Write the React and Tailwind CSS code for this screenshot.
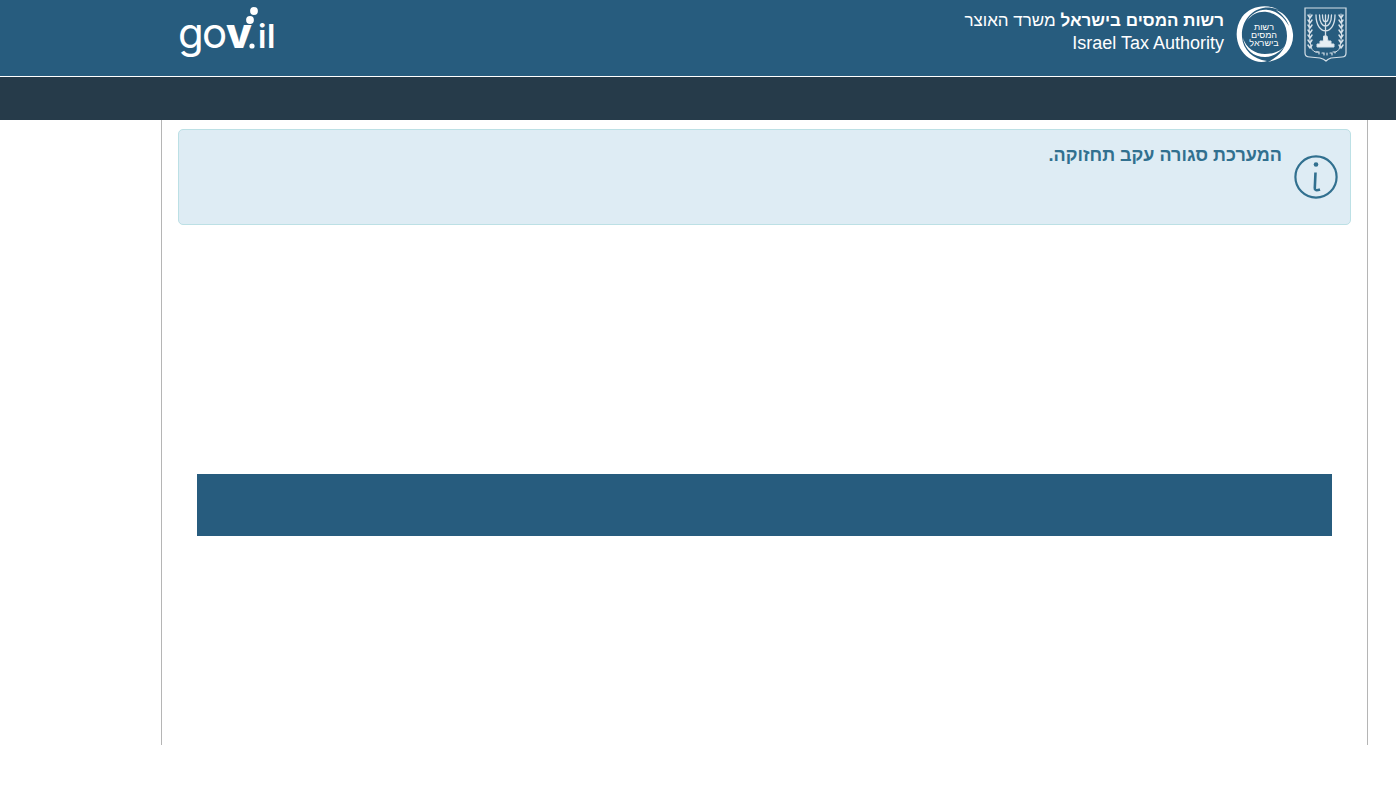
import React from "react";

const GovLogo = () => {
  return (
    <svg
      className="block h-[64px] w-[104px]"
      viewBox="0 0 104 64"
      fill="white"
      fontFamily="Inter, sans-serif"
      role="img"
      aria-label="gov.il"
    >
      <text x="2" y="48" fontSize="42" fontWeight="400">g</text>
      <text x="26" y="48" fontSize="42" fontWeight="400">o</text>
      <text x="50" y="48" fontSize="42" fontWeight="800">v</text>
      <circle cx="76" cy="46" r="2.600" />
      <text x="82" y="48" fontSize="32" fontWeight="600">i</text>
      <text x="91" y="48" fontSize="32" fontWeight="600">l</text>
      <circle cx="74" cy="20" r="3.900" />
      <circle cx="78" cy="11" r="3.900" />
    </svg>
  );
};

const AuthorityLogo = () => {
  return (
    <svg
      className="block size-[58px]"
      viewBox="0 0 58 58"
      fill="white"
      role="img"
      aria-label="רשות המסים"
    >
      <path d="M43 5C31-2 14 1 6 12C-4 27 1 45 13 53C19 57 26 58 31 56C17 54 7 45 6 32C5 17 15 5 27 3C33 2 38 3 43 5Z" />
      <path d="M11 16C16 9 23 6 31 7C43 9 51 18 51 31C51 42 44 51 32 57C48 54 58 43 57 29C56 17 49 8 40 5C47 10 51 15 53 21C47 11 40 6 32 5C23 4 16 8 11 16Z" />
      <path d="M7 33C9 45 18 52 29 52C38 52 46 46 51 38C46 46 38 49 29 49C19 49 10 43 7 33Z" />
      <g
        fontFamily="'Liberation Sans', sans-serif"
        fontSize="9"
        textAnchor="middle"
      >
        <text x="28" y="25">רשות</text>
        <text x="28" y="33">המסים</text>
        <text x="28" y="41">בישראל</text>
      </g>
    </svg>
  );
};

const leaves = [11, 16, 21, 26, 31, 36, 41];

const StateEmblem = () => {
  return (
    <svg
      className="block h-[56px] w-[44px]"
      viewBox="0 0 44 56"
      fill="none"
      stroke="#d5e0e8"
      strokeLinecap="round"
      role="img"
      aria-label="מדינת ישראל"
    >
      <path d="M1 1H42V46Q42 50 38 50L27 51Q24 52 22 54Q20 52 16 51L6 50Q1 50 1 46Z" strokeWidth="1.200" />
      {/* olive branches */}
      <path d="M6 7Q4 25 7 40Q9 46 14 45M37 7Q39 25 36 40Q34 46 29 45" strokeWidth="1" />
      {leaves.map((y) => (
        <path
          key={y}
          d={`M6 ${y}L4 ${y - 3}M6 ${y}L8 ${y - 3}M37 ${y}L35 ${y - 3}M37 ${y}L39 ${y - 3}`}
          strokeWidth="1.500"
        />
      ))}
      {/* menorah */}
      <path d="M12 8C12 29 31 29 31 8M15.500 8C15.500 23 27.500 23 27.500 8M18.500 8C18.500 17 24.500 17 24.500 8M21.500 8V34" strokeWidth="1.300" />
      <path d="M20 29H23L24 34H27V37H30V40H13V37H16V34H19Z" fill="#e6eef3" strokeWidth="1" />
      <path d="M12 45H15V47M18 46H20V48M23 46V48M26 46H28V48M31 45V46" strokeWidth="1.200" />
    </svg>
  );
};

const InfoIcon = () => {
  return (
    <svg className="block size-11 shrink-0" viewBox="0 0 44 44" fill="none" stroke="#31708f" aria-hidden="true">
      <circle cx="22" cy="22" r="20.600" strokeWidth="2.200" />
      <circle cx="22" cy="9.500" r="2.300" fill="#31708f" stroke="none" />
      <path d="M21.500 17.500L20.800 33Q20.500 36.500 26 34.500" strokeWidth="2.600" strokeLinejoin="round" />
    </svg>
  );
};

const Header = () => {
  return (
    <header>
      <div className="flex h-[77px] items-start justify-between border-b border-white bg-[#275c7e] pr-12 pl-44">
        <a href="#gov" className="block">
          <GovLogo />
        </a>
        <a href="#authority" dir="rtl" className="flex items-start pt-[5px] text-white">
          <span className="block pt-[2px]">
            <StateEmblem />
          </span>
          <span className="mr-[10px] block">
            <AuthorityLogo />
          </span>
          <span className="mr-3 block pt-[5px] text-right whitespace-nowrap">
            <span className="block text-[17px] leading-[22px]">
              <b>רשות המסים בישראל</b> משרד האוצר
            </span>
            <span className="block text-lg leading-[22px]">Israel Tax Authority</span>
          </span>
        </a>
      </div>
      <nav className="h-[43px] bg-[#263b4a]" />
    </header>
  );
};

const App = () => {
  return (
    <div className="font-['Liberation_Sans',sans-serif]">
      <Header />
      <main className="mr-7 ml-[161px] min-h-[625px] border-x border-[#b5b5b5] px-4 pt-[9px]">
        <div
          role="alert"
          dir="rtl"
          className="flex h-24 rounded-[5px] border border-[#bce0e5] bg-[#deecf4] px-3 text-[#31708f]"
        >
          <span className="flex items-center">
            <InfoIcon />
          </span>
          <h1 className="mr-3 pt-[14px] text-lg leading-[22px] font-bold">המערכת סגורה עקב תחזוקה.</h1>
        </div>
        <div className="mx-[19px] mt-[249px] h-[62px] bg-[#275c7e]" />
      </main>
    </div>
  );
};

export default App;
